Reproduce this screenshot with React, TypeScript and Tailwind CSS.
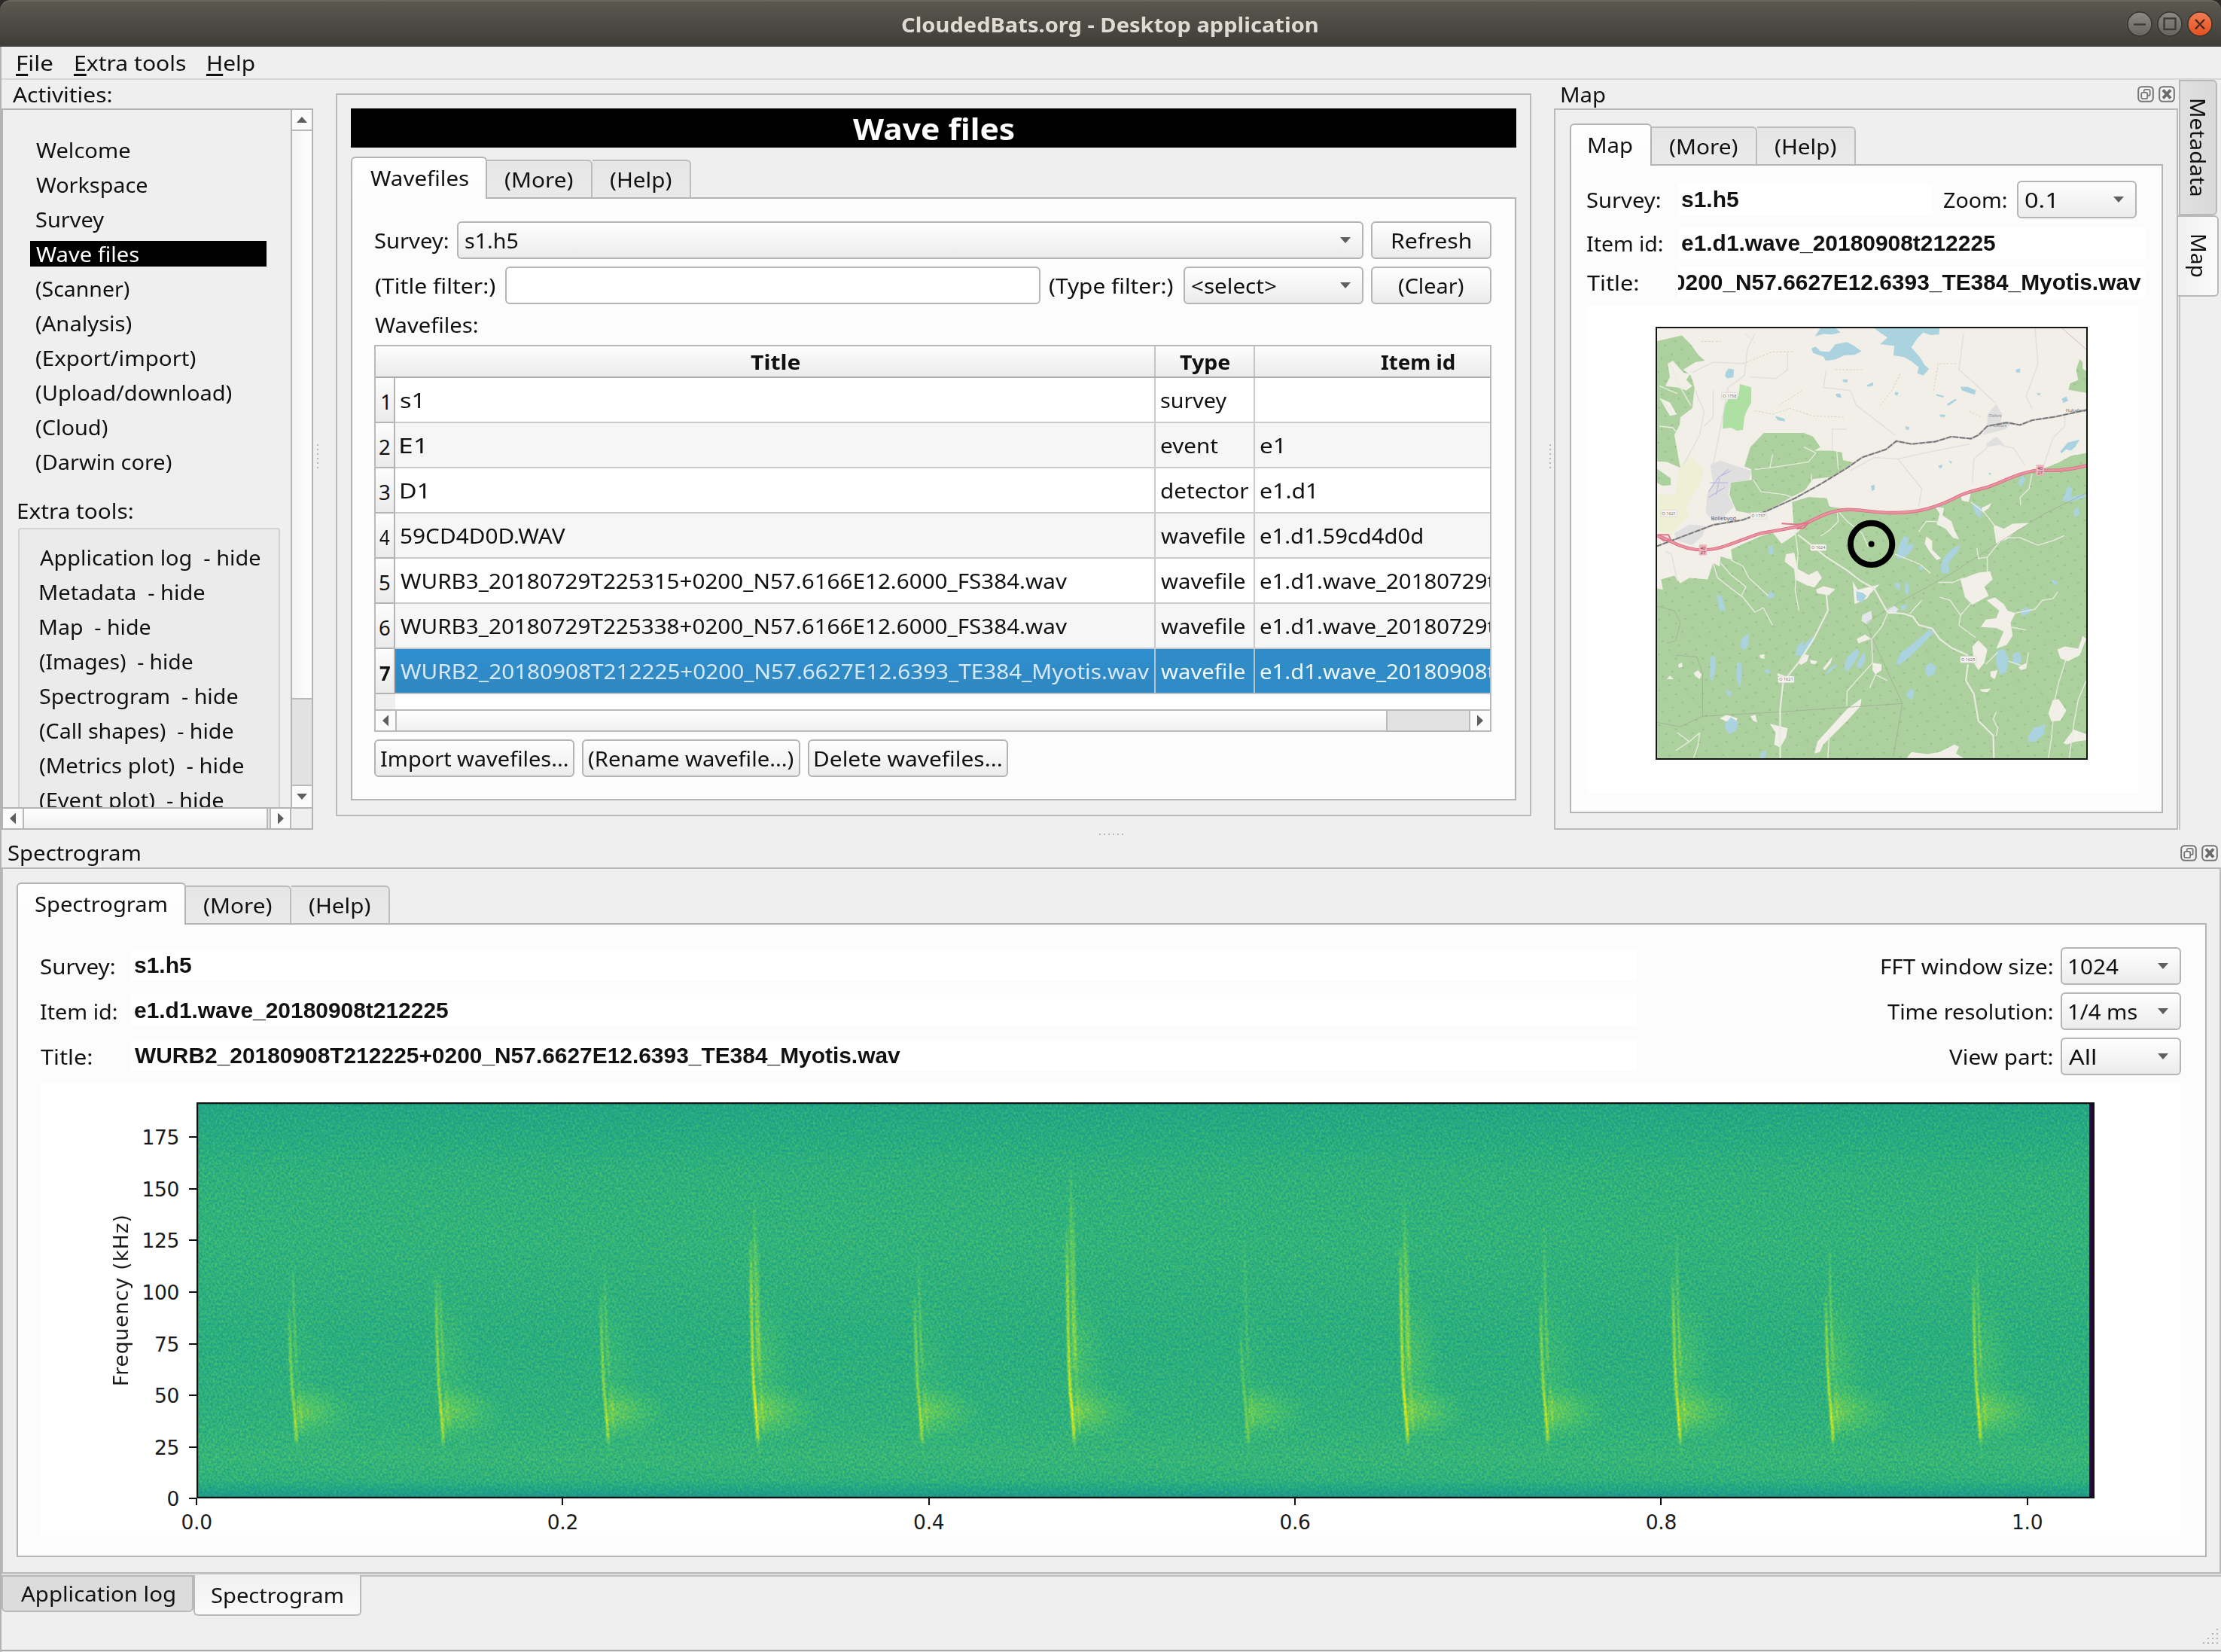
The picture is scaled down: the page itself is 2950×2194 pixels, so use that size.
import React from "react";

/* ---------- text fitted to a given ink width ---------- */

const FONTS = {
  ui: { cls: "font-['Noto_Sans',sans-serif] text-[27.5px] leading-[36px]", css: "27.5px 'Noto Sans'" },
  uib: { cls: "font-['Noto_Sans',sans-serif] text-[27.5px] leading-[36px] font-bold", css: "bold 27.5px 'Noto Sans'" },
  caption: { cls: "font-['Noto_Sans',sans-serif] text-[27px] leading-[36px] font-bold", css: "bold 27px 'Noto Sans'" },
  heading: { cls: "font-['Noto_Sans',sans-serif] text-[40px] leading-[50px] font-bold", css: "bold 40px 'Noto Sans'" },
  value: { cls: "font-['Liberation_Sans',sans-serif] text-[30px] leading-[36px] font-bold", css: "bold 30px 'Liberation Sans'" },
};

let ctx: CanvasRenderingContext2D | null = null;

function T({
  w,
  children,
  font = "ui",
  vertical = false,
  mnemonic = false,
  className = "",
}: {
  w: number;
  children: string;
  font?: keyof typeof FONTS;
  vertical?: boolean;
  mnemonic?: boolean;
  className?: string;
}) {
  if (!ctx) ctx = document.createElement("canvas").getContext("2d");
  const f = FONTS[font];
  ctx!.font = f.css;
  const m = ctx!.measureText(children);
  const k = w / (m.actualBoundingBoxRight + m.actualBoundingBoxLeft);
  const left = m.actualBoundingBoxLeft * k;
  const outer = vertical ? { height: w } : { width: w };
  const inner = vertical
    ? { transform: `scaleY(${k})`, marginTop: left }
    : { transform: `scaleX(${k})`, marginLeft: left };
  return (
    <span
      className={`flex shrink-0 whitespace-pre ${vertical ? "[writing-mode:vertical-rl]" : "pt-px"} ${f.cls} ${className}`}
      style={outer}
    >
      <span className="block shrink-0 origin-top-left" style={inner}>
        {mnemonic ? (
          <>
            <span className="underline decoration-[3px] underline-offset-[4px]">{children[0]}</span>
            {children.slice(1)}
          </>
        ) : (
          children
        )}
      </span>
    </span>
  );
}

/* ---------- widgets ---------- */

function Arrow({ dir }: { dir: "up" | "down" | "left" | "right" }) {
  const d = {
    up: "M1 12 L8 4 L15 12 Z",
    down: "M1 4 L8 12 L15 4 Z",
    left: "M12 0.5 L4 8 L12 15.5 Z",
    right: "M4 0.5 L12 8 L4 15.5 Z",
  }[dir];
  return (
    <svg viewBox="0 0 16 16" className="h-4 w-4 shrink-0">
      <path d={d} fill="#5e5e5e" />
    </svg>
  );
}

function Combo({ className, text, w }: { className: string; text: string; w: number }) {
  return (
    <div
      className={`flex h-[50px] shrink-0 items-center justify-between rounded-[6px] border-2 border-[#b4b4b4] bg-linear-to-b from-[#fefefe] to-[#ececec] pr-[14px] pl-[9px] ${className}`}
    >
      <T w={w}>{text}</T>
      <Arrow dir="down" />
    </div>
  );
}

function Button({ className, text, w }: { className: string; text: string; w: number }) {
  return (
    <div
      className={`flex h-[50px] shrink-0 items-center justify-center rounded-[6px] border-2 border-[#b4b4b4] bg-linear-to-b from-[#fefefe] to-[#ececec] ${className}`}
    >
      <T w={w}>{text}</T>
    </div>
  );
}

function Tabs({ first, firstW, firstCls }: { first: string; firstW: number; firstCls: string }) {
  return (
    <div className="flex h-[54px] shrink-0 items-end">
      <div
        className={`relative z-10 -mb-[2px] flex h-[56px] justify-center rounded-t-[6px] border-2 border-b-0 border-[#b4b4b4] bg-linear-to-b from-white to-[#fcfcfc] pt-[8px] ${firstCls}`}
      >
        <T w={firstW}>{first}</T>
      </div>
      <div className="flex h-[50px] w-[140px] justify-center rounded-tr-[6px] border-2 border-b-0 border-l-0 border-[#bdbdbd] bg-linear-to-b from-[#e6e6e6] to-[#eaeaea] pt-[6px]">
        <T w={90}>(More)</T>
      </div>
      <div className="flex h-[50px] w-[131px] justify-center rounded-tr-[6px] border-2 border-b-0 border-l-0 border-[#bdbdbd] bg-linear-to-b from-[#e6e6e6] to-[#eaeaea] pt-[6px]">
        <T w={81}>(Help)</T>
      </div>
    </div>
  );
}

function DockButtons({ className }: { className: string }) {
  return (
    <div className={`flex ${className}`}>
      <svg viewBox="0 0 22 22" className="h-[22px] w-[22px]">
        <rect x="1.2" y="1.2" width="19.6" height="19.6" rx="4.5" fill="#f4f4f4" stroke="#757575" strokeWidth="2" />
        <rect x="8.7" y="4.8" width="8" height="8.4" rx="2" fill="none" stroke="#757575" strokeWidth="1.8" />
        <rect x="5.2" y="8.8" width="8" height="8.4" rx="2" fill="#f4f4f4" stroke="#757575" strokeWidth="1.8" />
      </svg>
      <svg viewBox="0 0 22 22" className="h-[22px] w-[22px]">
        <rect x="1.2" y="1.2" width="19.6" height="19.6" rx="4.5" fill="#f4f4f4" stroke="#757575" strokeWidth="2" />
        <path d="M6 5.5 L16 16.5 M16 5.5 L6 16.5" stroke="#6a6a6a" strokeWidth="4" />
      </svg>
    </div>
  );
}

function Grip({ horizontal = false }: { horizontal?: boolean }) {
  return (
    <div className={`flex gap-[4px] ${horizontal ? "" : "flex-col"}`}>
      {[0, 1, 2, 3, 4, 5].map((i) => (
        <div key={i} className="h-[2px] w-[2px] bg-[#b9b9b9]" />
      ))}
    </div>
  );
}

/* ---------- title and menu bars ---------- */

function TitleBar() {
  return (
    <div className="h-[62px] shrink-0 bg-[#2b2a27]">
      <div className="flex h-full items-center rounded-t-[14px] border-t-2 border-[#6b6860] bg-linear-to-b from-[#5c5850] to-[#3e3d38]">
        <div className="w-[1198px]" />
        <T w={552} font="caption" className="text-[#dfdbd2]">
          CloudedBats.org - Desktop application
        </T>
        <svg viewBox="0 0 120 40" className="ml-[1072px] h-[40px] w-[120px]">
          <defs>
            <linearGradient id="tb-grey" x1="0" y1="0" x2="0" y2="1">
              <stop offset="0" stopColor="#8c8a83" />
              <stop offset="1" stopColor="#66645d" />
            </linearGradient>
            <linearGradient id="tb-red" x1="0" y1="0" x2="0" y2="1">
              <stop offset="0" stopColor="#f37c54" />
              <stop offset="1" stopColor="#e3501f" />
            </linearGradient>
          </defs>
          <circle cx="20" cy="20" r="16" fill="url(#tb-grey)" stroke="#35342f" strokeWidth="1.5" />
          <path d="M12 20.5 H28" stroke="#3c3b37" strokeWidth="2.4" />
          <circle cx="60" cy="20" r="16" fill="url(#tb-grey)" stroke="#35342f" strokeWidth="1.5" />
          <rect x="52.5" y="12.5" width="15" height="14.5" fill="none" stroke="#3c3b37" strokeWidth="2.4" />
          <circle cx="100" cy="20" r="16" fill="url(#tb-red)" stroke="#35342f" strokeWidth="1.5" />
          <path d="M94 14 L106 26.5 M106 14 L94 26.5" stroke="#4a2a1c" strokeWidth="2.4" />
        </svg>
      </div>
    </div>
  );
}

function MenuBar() {
  return (
    <div className="flex h-[44px] shrink-0 items-center border-b-2 border-[#d6d6d6] pl-[21px]">
      <T w={47} mnemonic>
        File
      </T>
      <div className="w-[30px]" />
      <T w={146} mnemonic>
        Extra tools
      </T>
      <div className="w-[30px]" />
      <T w={62} mnemonic>
        Help
      </T>
    </div>
  );
}

/* ---------- activities ---------- */

const ACTIVITIES: [string, number][] = [
  ["Welcome", 125],
  ["Workspace", 148],
  ["Survey", 91],
  ["Wave files", 136],
  ["(Scanner)", 124],
  ["(Analysis)", 127],
  ["(Export/import)", 212],
  ["(Upload/download)", 260],
  ["(Cloud)", 95],
  ["(Darwin core)", 180],
];

const TOOLS: [string, number][] = [
  ["Application log  - hide", 293],
  ["Metadata  - hide", 219],
  ["Map  - hide", 147],
  ["(Images)  - hide", 203],
  ["Spectrogram  - hide", 263],
  ["(Call shapes)  - hide", 257],
  ["(Metrics plot)  - hide", 271],
  ["(Event plot)  - hide", 244],
];

function Activities() {
  return (
    <div className="flex w-[414px] shrink-0 flex-col">
      <div className="flex h-[38px] items-center pl-[15px]">
        <T w={131}>Activities:</T>
      </div>
      <div className="flex h-[958px] flex-col border-2 border-[#b4b4b4]">
        <div className="flex h-[926px]">
          <div className="flex w-[382px] flex-col overflow-hidden">
            <div className="mt-[33px] flex flex-col gap-[6px] pl-[36px]">
              {ACTIVITIES.map(([name, w]) => (
                <div key={name} className="flex h-[40px] items-center">
                  <div
                    className={
                      name === "Wave files"
                        ? "flex h-[34px] w-[314px] items-center bg-black pl-[8px] text-white"
                        : "flex h-[34px] w-[314px] items-center pl-[8px]"
                    }
                  >
                    <T w={w}>{name}</T>
                  </div>
                </div>
              ))}
            </div>
            <div className="mt-[27px] flex h-[36px] pl-[20px]">
              <T w={152}>Extra tools:</T>
            </div>
            <div className="mt-[5px] ml-[20px] h-[400px] w-[348px] shrink-0 rounded-[4px] border-2 border-[#d2d2d2] bg-[#ebebeb] pt-[14px] pl-[27px]">
              {TOOLS.map(([name, w]) => (
                <div key={name} className="flex h-[46px] items-center">
                  <T w={w}>{name}</T>
                </div>
              ))}
            </div>
          </div>
          <div className="flex w-[28px] flex-col border-l-2 border-[#b4b4b4]">
            <div className="flex h-[28px] items-center justify-center border-b-2 border-[#b9b9b9] bg-[#fbfbfb]">
              <Arrow dir="up" />
            </div>
            <div className="h-[755px] border-b-2 border-[#b9b9b9] bg-linear-to-r from-[#f3f3f3] to-white" />
            <div className="h-[115px] border-b-2 border-[#b9b9b9] bg-[#e2e2e2]" />
            <div className="flex flex-1 items-center justify-center bg-[#fbfbfb]">
              <Arrow dir="down" />
            </div>
          </div>
        </div>
        <div className="flex h-[28px] border-t-2 border-[#b4b4b4]">
          <div className="flex w-[28px] items-center justify-center border-r-2 border-[#b9b9b9] bg-[#fbfbfb]">
            <Arrow dir="left" />
          </div>
          <div className="w-[324px] border-r-2 border-[#b9b9b9] bg-linear-to-b from-white to-[#f1f1f1]" />
          <div className="w-[4px] border-r-2 border-[#b9b9b9] bg-[#e2e2e2]" />
          <div className="flex w-[27px] items-center justify-center border-r-2 border-[#b9b9b9] bg-[#fbfbfb]">
            <Arrow dir="right" />
          </div>
        </div>
      </div>
    </div>
  );
}

/* ---------- wave files ---------- */

type Row = { t: string; tw: number; k: string; kw: number; i?: string; iw?: number };

const ROWS: Row[] = [
  { t: "s1", tw: 26, k: "survey", kw: 88 },
  { t: "E1", tw: 30, k: "event", kw: 76, i: "e1", iw: 28 },
  { t: "D1", tw: 33, k: "detector", kw: 116, i: "e1.d1", iw: 71 },
  { t: "59CD4D0D.WAV", tw: 219, k: "wavefile", kw: 112, i: "e1.d1.59cd4d0d", iw: 215 },
  {
    t: "WURB3_20180729T225315+0200_N57.6166E12.6000_FS384.wav",
    tw: 885,
    k: "wavefile",
    kw: 112,
    i: "e1.d1.wave_20180729t225315",
    iw: 412,
  },
  {
    t: "WURB3_20180729T225338+0200_N57.6166E12.6000_FS384.wav",
    tw: 885,
    k: "wavefile",
    kw: 112,
    i: "e1.d1.wave_20180729t225338",
    iw: 412,
  },
  {
    t: "WURB2_20180908T212225+0200_N57.6627E12.6393_TE384_Myotis.wav",
    tw: 994,
    k: "wavefile",
    kw: 112,
    i: "e1.d1.wave_20180908t212225",
    iw: 412,
  },
];

function WaveTable() {
  return (
    <div className="flex h-[514px] w-[1484px] flex-col border-2 border-[#b9b9b9] bg-white">
      <div className="flex h-[42px] border-b-2 border-[#adadad] bg-linear-to-b from-[#fdfdfd] to-[#ebebeb]">
        <div className="flex w-[1036px] shrink-0 items-center justify-center border-r-2 border-[#c4c4c4] pl-[28px]">
          <T w={66} font="uib">
            Title
          </T>
        </div>
        <div className="flex w-[132px] items-center justify-center border-r-2 border-[#c4c4c4]">
          <T w={67} font="uib">
            Type
          </T>
        </div>
        <div className="flex items-center pl-[167px]">
          <T w={98} font="uib">
            Item id
          </T>
        </div>
      </div>
      {ROWS.map((r, n) => {
        const sel = n === 6;
        return (
          <div key={n} className="flex h-[60px] shrink-0">
            <div className="flex w-[26px] shrink-0 items-center justify-center border-r-2 border-b-2 border-[#b4b4b4] bg-linear-to-b from-[#fdfdfd] to-[#ebebeb] pt-[4px]">
              <T w={n === 0 ? 8 : 14} font={sel ? "uib" : "ui"}>
                {String(n + 1)}
              </T>
            </div>
            <div
              className={
                sel
                  ? "flex w-[1010px] shrink-0 items-center border-r-2 border-b-2 border-[#b8c4cc] bg-linear-to-b from-[#2f8fd0] to-[#2f87bf] pl-[7px] text-[#d6e8f5]"
                  : n % 2
                    ? "flex w-[1010px] shrink-0 items-center border-r-2 border-b-2 border-[#cbcbcb] bg-[#f6f6f6] pl-[7px]"
                    : "flex w-[1010px] shrink-0 items-center border-r-2 border-b-2 border-[#cbcbcb] pl-[7px]"
              }
            >
              <T w={r.tw}>{r.t}</T>
            </div>
            <div
              className={
                sel
                  ? "flex w-[132px] shrink-0 items-center border-r-2 border-b-2 border-[#b8c4cc] bg-[#308cc6] pl-[7px] text-[#eff6fb]"
                  : n % 2
                    ? "flex w-[132px] shrink-0 items-center border-r-2 border-b-2 border-[#cbcbcb] bg-[#f6f6f6] pl-[7px]"
                    : "flex w-[132px] shrink-0 items-center border-r-2 border-b-2 border-[#cbcbcb] pl-[7px]"
              }
            >
              <T w={r.kw}>{r.k}</T>
            </div>
            <div
              className={
                sel
                  ? "flex w-[312px] shrink-0 items-center overflow-hidden border-b-2 border-[#b8c4cc] bg-[#308cc6] pl-[7px] text-[#eff6fb]"
                  : n % 2
                    ? "flex w-[312px] shrink-0 items-center overflow-hidden border-b-2 border-[#cbcbcb] bg-[#f6f6f6] pl-[7px]"
                    : "flex w-[312px] shrink-0 items-center overflow-hidden border-b-2 border-[#cbcbcb] pl-[7px]"
              }
            >
              {r.i && <T w={r.iw!}>{r.i}</T>}
            </div>
          </div>
        );
      })}
      <div className="flex flex-1">
        <div className="w-[26px] bg-[#efefef]" />
      </div>
      <div className="flex h-[28px] border-t-2 border-[#b9b9b9]">
        <div className="flex w-[28px] items-center justify-center border-r-2 border-[#b9b9b9] bg-[#fbfbfb]">
          <Arrow dir="left" />
        </div>
        <div className="w-[1316px] border-r-2 border-[#b9b9b9] bg-linear-to-b from-white to-[#f1f1f1]" />
        <div className="w-[110px] border-r-2 border-[#b9b9b9] bg-[#e2e2e2]" />
        <div className="flex flex-1 items-center justify-center bg-[#fbfbfb]">
          <Arrow dir="right" />
        </div>
      </div>
    </div>
  );
}

function WaveFiles() {
  return (
    <div className="mt-[18px] flex h-[960px] w-[1588px] shrink-0 flex-col border-2 border-[#bababa] pt-[18px] pl-[18px]">
      <div className="flex h-[52px] w-[1548px] shrink-0 items-center justify-center bg-black">
        <T w={214} font="heading" className="text-white">
          Wave files
        </T>
      </div>
      <div className="h-[12px] shrink-0" />
      <Tabs first="Wavefiles" firstW={130} firstCls="w-[181px]" />
      <div className="flex h-[801px] w-[1548px] flex-col border-2 border-[#b4b4b4] bg-[#fcfcfc] pt-[30px] pl-[29px]">
        <div className="flex items-center">
          <div className="w-[1px]" />
          <T w={97}>Survey:</T>
          <div className="w-[12px]" />
          <Combo className="w-[1204px]" text="s1.h5" w={70} />
          <div className="w-[10px]" />
          <Button className="w-[160px]" text="Refresh" w={104} />
        </div>
        <div className="mt-[10px] flex items-center">
          <div className="w-[2px]" />
          <T w={159}>(Title filter:)</T>
          <div className="w-[13px]" />
          <div className="h-[50px] w-[711px] rounded-[6px] border-2 border-[#b4b4b4] bg-white" />
          <div className="w-[12px]" />
          <T w={164}>(Type filter:)</T>
          <div className="w-[14px]" />
          <Combo className="w-[239px]" text="<select>" w={112} />
          <div className="w-[10px]" />
          <Button className="w-[160px]" text="(Clear)" w={86} />
        </div>
        <div className="mt-[9px] mb-[9px] flex h-[36px] pl-[1px]">
          <T w={136}>Wavefiles:</T>
        </div>
        <WaveTable />
        <div className="mt-[10px] flex gap-[10px]">
          <Button className="w-[266px]" text="Import wavefiles..." w={248} />
          <Button className="w-[290px]" text="(Rename wavefile...)" w={272} />
          <Button className="w-[266px]" text="Delete wavefiles..." w={248} />
        </div>
      </div>
    </div>
  );
}

/* ---------- map ---------- */

const LAKES = [
  "M600 40 L650 40 L668 55 L640 62 L610 60 L582 68 Z",
  "M570 108 L585 103 L600 118 L630 120 L650 95 L690 87 L712 100 L738 118 L715 130 L680 132 L650 146 L618 150 L610 136 L575 124 Z",
  "M780 40 L1000 40 L998 62 L970 64 L945 55 L925 75 L905 105 L935 140 L950 165 L965 178 L945 200 L925 192 L930 172 L905 152 L880 138 L845 132 L848 100 L800 95 L825 72 L795 52 Z",
  "M282 190 L292 176 L310 180 L308 205 L290 210 L280 203 Z",
  "M674 213 L692 213 L690 223 L678 222 Z M755 232 L778 222 L776 234 L760 238 Z",
  "M650 262 L665 260 L672 275 L655 272 Z M850 255 L862 256 L858 268 L850 264 Z",
  "M1070 238 L1095 238 L1122 250 L1118 264 L1098 258 L1075 250 Z",
  "M1024 296 L1052 278 L1058 282 L1030 302 Z M988 262 L1014 268 L1012 274 L990 268 Z",
  "M1255 180 L1270 176 L1270 190 L1258 190 Z M1410 278 L1425 270 L1432 284 L1415 292 Z",
  "M448 336 L478 344 L482 354 L456 350 Z M885 370 L900 374 L895 384 L887 380 Z",
  "M1405 455 L1430 425 L1470 415 L1455 440 L1440 452 L1425 448 L1408 462 Z",
  "M770 570 L782 566 L782 584 L772 588 Z M996 502 L1010 500 L1006 512 L998 510 Z M1030 486 L1042 488 L1038 497 Z",
  "M1000 330 L1020 332 L1016 340 L1002 338 Z M1164 526 L1174 528 L1168 536 Z M1324 258 L1340 260 L1334 268 Z",
  "M1108 628 L1138 640 L1140 680 L1120 665 Z",
  "M1412 620 L1430 570 L1445 580 L1440 610 L1490 595 L1490 608 L1440 625 Z",
  "M1072 768 L1062 790 L1030 830 L1032 862 L1008 866 L1003 840 L1015 810 L1045 780 Z",
  "M855 815 L862 775 L880 740 L898 745 L890 770 L915 765 L905 790 L880 815 Z",
  "M850 895 L868 900 L865 920 L852 915 Z M885 890 L898 905 L895 938 L884 930 Z",
  "M425 775 L440 770 L442 800 L426 798 Z M252 935 L268 940 L282 990 L262 990 Z",
  "M420 940 L432 925 L447 936 L440 948 L424 948 Z",
  "M335 1085 L360 1065 L358 1105 L345 1125 L332 1110 Z",
  "M232 1145 L247 1142 L248 1190 L238 1228 L228 1215 Z M320 1165 L334 1165 L336 1205 L330 1252 L318 1215 Z",
  "M412 1190 L425 1185 L432 1198 L418 1203 Z",
  "M515 1140 L525 1105 L545 1090 L540 1110 L575 1075 L578 1095 L540 1140 Z",
  "M680 1180 L690 1145 L725 1115 L730 1135 L710 1170 L690 1195 Z M722 1180 L725 1160 L748 1130 L752 1155 L735 1185 Z",
  "M615 1200 L650 1170 L655 1176 L625 1202 Z",
  "M852 1170 L870 1130 L905 1105 L965 1055 L985 1058 L950 1095 L900 1145 L865 1172 Z",
  "M955 1175 L970 1165 L988 1180 L980 1205 L960 1212 L952 1195 Z",
  "M1188 1130 L1215 1118 L1232 1150 L1225 1195 L1205 1206 L1192 1175 Z",
  "M1245 1135 L1270 1128 L1275 1155 L1265 1172 L1245 1165 Z",
  "M1272 990 L1290 978 L1308 988 L1295 1002 L1275 1008 Z",
  "M1295 1415 L1315 1385 L1355 1372 L1350 1405 L1320 1430 L1300 1430 Z",
  "M280 1370 L300 1348 L325 1365 L318 1392 L295 1405 L282 1390 Z",
  "M888 1270 L905 1252 L915 1262 L908 1290 L890 1280 Z M282 1255 L300 1262 L300 1278 L286 1272 Z",
  "M720 925 L742 930 L755 940 L740 962 L722 955 Z M400 1465 L418 1460 L415 1485 L398 1485 Z",
  "M1450 655 L1465 640 L1470 668 L1452 675 Z M1262 560 L1278 535 L1288 545 L1275 575 Z",
  "M930 840 L944 842 L940 855 L932 853 Z M868 975 L892 970 L886 985 L872 990 Z M1375 885 L1398 895 L1392 905 L1378 897 Z",
];

const CLEARINGS = [
  "M485 800 L512 795 L520 830 L525 850 L560 870 L590 855 L605 880 L580 912 L555 905 L515 885 L512 850 L480 825 Z",
  "M585 920 L610 908 L650 918 L628 938 L590 932 Z",
  "M1070 885 L1130 862 L1170 858 L1178 885 L1150 910 L1165 940 L1110 970 L1085 945 Z",
  "M1158 955 L1185 945 L1215 968 L1228 990 L1255 998 L1238 1030 L1245 1075 L1225 1105 L1190 1118 L1215 1060 L1190 1048 L1138 1045 L1155 1020 L1190 1015 L1200 990 Z",
  "M1110 1110 L1130 1090 L1160 1120 L1150 1165 L1130 1190 L1115 1165 Z",
  "M1395 1120 L1420 1110 L1465 1118 L1480 1075 L1492 1085 L1470 1140 L1430 1160 L1405 1150 Z",
  "M1380 1290 L1400 1288 L1425 1325 L1405 1360 L1375 1362 L1365 1335 Z",
  "M1415 1435 L1450 1390 L1492 1405 L1492 1425 L1455 1430 L1425 1440 Z",
  "M430 1370 L490 1385 L485 1415 L465 1450 L445 1440 L450 1400 Z",
  "M580 1470 L590 1430 L640 1375 L690 1320 L738 1285 L735 1310 L690 1360 L640 1410 L610 1440 L598 1465 Z",
  "M775 1165 L805 1170 L805 1190 L785 1205 L775 1190 Z M722 1085 L750 1070 L770 1085 L740 1095 L728 1100 Z",
  "M1180 700 L1215 715 L1245 698 L1305 695 L1260 720 L1225 750 L1190 765 Z",
  "M985 640 L1015 645 L1010 670 L1040 690 L1050 720 L1065 750 L1045 745 L1020 715 L990 700 L1000 665 Z",
  "M955 740 L975 755 L975 785 L1005 815 L990 820 L965 790 L950 765 Z",
  "M708 890 L725 920 L798 902 L770 930 L755 950 L715 968 Z",
  "M1068 598 L1105 592 L1098 625 L1075 620 Z M1140 645 L1175 628 L1165 645 L1145 660 Z",
  "M175 1200 L190 1190 L202 1205 L195 1220 L180 1210 Z M85 1220 L95 1208 L108 1220 Z M122 1172 L135 1164 L138 1178 L126 1182 Z",
  "M262 1352 L285 1340 L322 1352 L315 1365 L282 1362 Z M365 1345 L382 1340 L388 1366 L375 1360 Z M395 1140 L412 1136 L412 1152 L400 1150 Z",
  "M525 1165 L540 1135 L562 1140 L555 1160 L535 1172 Z M565 1155 L590 1160 L582 1170 L568 1168 Z M608 1185 L640 1145 L635 1165 L615 1190 Z",
  "M455 1200 L480 1208 L495 1215 L480 1228 L460 1222 Z M890 1485 L905 1465 L960 1472 L1000 1465 L1050 1440 L1065 1448 L1055 1470 L1080 1485 Z",
  "M1135 1255 L1172 1252 L1160 1264 L1142 1262 Z M1265 1180 L1292 1165 L1290 1185 L1272 1190 Z M1170 1195 L1195 1190 L1185 1220 L1172 1212 Z",
];

const ROADS = [
  "M515 720 L525 800 L515 920 L528 990",
  "M600 740 L630 720 L660 690 L655 650 L690 690 L740 730 L760 775",
  "M1000 945 L1035 955 L1070 1005 L1065 1040 L1120 1080 M1070 1005 L1105 965",
  "M240 830 L255 880 L300 915 L340 945 L380 995 L408 980 L440 1040",
  "M265 830 L300 870 L350 910 L335 940 M300 820 L340 840 L360 880 L425 940",
  "M1105 625 L1150 660 L1185 705 L1200 760 L1160 810 L1130 815 L1125 780 M1160 810 L1160 860",
  "M825 1000 L805 1045 L772 1085 L775 1165 L730 1215 L690 1260 L688 1310",
  "M850 800 L900 820 L935 835 L970 865 M930 725 L955 690 L985 690 L1015 700",
  "M1200 745 L1270 745 L1330 770 L1380 755 L1418 738",
  "M1310 530 L1300 580 L1270 610 L1272 635",
  "M1255 998 L1320 985 L1345 955 L1380 950 L1398 925",
  "M1155 1170 L1195 1130 M1232 1160 L1290 1180 L1298 1130 M1240 1045 L1290 1055",
  "M1380 1362 L1375 1420 L1365 1485 M1425 1150 L1400 1230 L1385 1295 M1492 1225 L1465 1290 L1450 1370 L1435 1485",
  "M785 1205 L765 1250 M785 1205 L825 1225 M900 1000 L940 955 M995 895 L1045 895 L1080 880",
  "M1190 1330 L1180 1355 L1195 1385 L1190 1410 M630 1400 L625 1485 M195 1400 L190 1440 L175 1485",
  "M120 1400 L160 1430 L195 1400 M160 1430 L115 1460",
  "M380 515 L430 510 L440 465 M430 510 L560 490 L585 460 L545 440 M375 550 L400 590 L480 600 L520 615",
  "M655 455 L660 515 M570 530 L570 560 M95 160 L125 230 L165 300 M60 235 L120 260 M65 280 L105 325 M60 370 L105 375 L125 400",
];

const MAIN_ROADS = [
  "M525 735 L570 770 L620 810 L690 855 L735 890 L780 915 L825 995 L880 1000 L910 1010 L930 1038 L975 1050 L1000 1085 L1040 1115 L1095 1140",
  "M620 935 L625 990 L580 1080 L530 1160 L475 1230 L465 1320 L465 1485",
  "M1095 1170 L1088 1225 L1115 1270 L1130 1360 L1180 1410 L1182 1485",
];

const RAIL =
  "M50 774 L100 755 L240 702 L340 685 L420 655 L515 612 L600 565 L690 510 L740 475 L820 448 L855 420 L905 430 L985 422 L1040 405 L1105 412 L1130 400 L1160 370 L1225 358 L1270 366 L1310 350 L1390 338 L1494 315";

const MOTORWAY =
  "M50 738 Q75 745 100 758 Q150 785 205 786 C270 786 320 755 400 730 Q460 720 520 708 C570 695 610 655 690 650 C740 650 780 662 850 661 C930 660 990 645 1070 602 Q1100 590 1150 578 C1200 565 1250 530 1320 519 L1400 518 Q1450 514 1495 502";

const SHIELDS: [number, number, string][] = [
  [295, 268, "O 1758"],
  [92, 663, "O 1621"],
  [392, 671, "O 1757"],
  [593, 778, "O 1624"],
  [485, 1221, "O 1621"],
  [1096, 1154, "O 1625"],
];

function MapPicture() {
  const land = "#f2efe9";
  const green = "#add19e";
  const water = "#aad3df";
  return (
    <svg viewBox="47 36 1450 1455" preserveAspectRatio="none" className="h-[575px] w-[574px] font-['Noto_Sans',sans-serif]">
      <defs>
        <pattern id="trees" width="58" height="46" patternUnits="userSpaceOnUse" patternTransform="rotate(14)">
          <path d="M10 10 l4 -4 l4 4 z M38 32 l4 -4 l4 4 z" fill="#93bd85" stroke="#93bd85" strokeWidth="1.5" />
        </pattern>
        <g id="forest">
          <path d="M50 85 L135 65 L165 95 L190 130 L212 150 L180 155 L140 180 L165 200 L178 240 L170 310 L130 340 L128 365 L110 400 L130 510 L85 490 L50 488 Z" />
          <path d="M410 393 L545 393 L575 405 L600 440 L580 452 L640 452 L672 458 L676 484 L710 492 L640 540 L575 548 L548 585 L500 610 L420 655 L360 662 L318 655 L295 600 L300 560 L370 550 L368 515 L345 505 L365 440 Z" />
          <path d="M50 512 L98 545 L98 568 L70 570 L50 560 Z" />
          <path d="M1470 145 L1480 155 L1480 178 L1494 185 L1494 258 L1432 248 L1438 226 L1465 215 L1458 180 Z" />
          <path d="M505 625 L560 608 L622 612 L630 640 L665 645 L740 652 L800 662 L870 664 L930 657 L1000 637 L1070 602 L1130 585 L1200 564 L1260 537 L1320 518 L1350 512 L1400 492 L1440 470 L1494 460 L1494 1489 L50 1489 L50 915 L72 920 L65 885 L110 872 L130 898 L160 880 L222 885 L240 830 L262 842 L265 808 L305 820 L300 785 L335 768 L400 740 L440 728 L470 765 L515 735 L535 715 L510 700 Z" />
        </g>
      </defs>
      <rect x="47" y="36" width="1450" height="1455" fill={land} />
      <path d="M130 500 L160 470 L210 510 L195 570 L150 640 L160 670 L100 735 L50 720 L50 600 L110 600 Z" fill="#eef0d5" />
      <path
        d="M230 500 L265 485 L320 505 L370 520 L360 550 L300 560 L290 600 L310 640 L270 680 L240 690 L215 660 L220 600 L240 560 Z M110 730 L160 700 L215 705 L205 740 L170 770 L120 755 Z M1160 330 L1190 296 L1210 330 L1205 355 L1250 355 L1220 380 L1145 400 L1160 365 Z M1155 430 L1190 405 L1215 430 L1160 440 Z"
        fill="#e0dfdf"
      />
      <path d="M225 590 L260 540 L300 520 M230 560 L290 560 M250 600 L262 545 M225 610 L280 575 M262 540 L290 515" stroke="#b9b9df" strokeWidth="3" fill="none" />
      <use href="#forest" fill={green} />
      <use href="#forest" fill="url(#trees)" />
      <path d="M330 228 L368 240 L368 290 L352 320 L345 340 L340 382 L320 385 L300 375 L272 378 L275 310 L290 280 L325 270 Z" fill="#aedfa3" />
      <path d="M88 160 L105 150 L140 190 L162 195 L150 215 L170 235 L150 250 L120 240 L80 235 L95 205 Z M60 275 L95 290 L118 330 L95 335 Z" fill={land} />
      <g fill="none" stroke="#e3dfdf" strokeWidth="4">
        <path d="M380 60 L355 110 L345 200 L290 240 L260 400 L240 500 M170 190 L240 155 L340 160 M365 205 L450 210 L490 180 L490 120 M180 250 L210 320 L195 400 L140 500 M240 250 L240 340 L210 370" />
        <path d="M1080 60 L1065 180 L1110 220 L1185 290 M1320 40 L1330 160 L1290 270 L1310 310 M610 240 L700 250 L720 300 L800 360 L850 400 M620 180 L610 240 M640 450 L640 380 L690 380" />
        <path d="M700 520 L780 475 L860 480 L950 460 L1100 430 M860 480 L940 580 L930 640 M1110 560 L1115 480 L1180 425 L1250 445 L1285 500 M1350 500 L1380 410 L1420 370 L1420 330 M80 790 L100 800 L120 890" />
      </g>
      <path
        d="M350 60 L385 95 M380 318 L440 330 L500 310 L570 335 L680 340 M460 300 L540 250 M980 250 L995 160 L1060 160 M800 300 L840 250 L870 190 M1100 320 L1140 340 M650 180 L740 180 M200 85 L265 85 M340 160 L440 120 L510 120"
        stroke="#dccfbf"
        strokeWidth="2.5"
        strokeDasharray="7 5"
        fill="none"
      />
      <g fill={land}>
        {CLEARINGS.map((d) => (
          <path key={d} d={d} />
        ))}
      </g>
      <g fill={water}>
        {LAKES.map((d) => (
          <path key={d} d={d} />
        ))}
      </g>
      <path d="M740 1005 L770 990 L775 1020 L755 1035 L738 1025 Z M822 985 L845 972 L862 985 L850 1000 L825 1000 Z" fill="#e3e6ea" />
      <path
        d="M50 975 L110 990 L130 1030 L115 1090 L85 1100 M115 1140 L185 1145 L205 1200 L205 1345 L130 1380 L50 1365 M205 1345 L470 1330 L875 1302 L845 1480 M875 1302 L755 1040 L745 1035 M755 1030 L860 965 L1040 865 L1200 760 L1350 665 L1492 595"
        fill="none"
        stroke="#98a892"
        strokeWidth="2.2"
        opacity="0.8"
      />
      <path d="M1410 40 L1492 112" stroke="#cfb5cb" strokeWidth="2.5" fill="none" />
      <g fill="none" stroke="#e9ebe0" strokeLinejoin="round">
        {ROADS.map((d) => (
          <path key={d} d={d} strokeWidth="3.4" />
        ))}
        {MAIN_ROADS.map((d) => (
          <path key={d} d={d} strokeWidth="5.5" />
        ))}
      </g>
      <g fill="none" strokeLinejoin="round">
        <path d={RAIL} stroke="#b3b3b3" strokeWidth="6" />
        <path d={RAIL} stroke="#77777b" strokeWidth="4.5" strokeDasharray="18 5" />
        <path d={MOTORWAY} stroke="#d9697e" strokeWidth="11" />
        <path d={MOTORWAY} stroke="#e892a2" strokeWidth="7" />
        <path d="M470 697 L520 700 L560 695 L545 712 L520 715 M55 735 L90 735 L98 752 L75 755 L60 745" stroke="#e0748a" strokeWidth="5" />
      </g>
      <g textAnchor="middle">
        {SHIELDS.map(([x, y, s]) => (
          <g key={`${x}-${y}`}>
            <rect x={x - 27} y={y - 11} width="54" height="22" rx="4" fill="#f5f4f0" stroke="#cfccc6" strokeWidth="1.5" />
            <text x={x} y={y + 5} fontSize="14" fill="#77756f">
              {s}
            </text>
          </g>
        ))}
        {[
          [206, 786],
          [1337, 518],
        ].map(([x, y]) => (
          <g key={x}>
            <rect x={x - 13} y={y - 18} width="26" height="36" rx="3" fill="#eab4be" />
            <text x={x} y={y - 2} fontSize="14" fill="#7d2d3b">
              40
            </text>
            <text x={x} y={y + 13} fontSize="14" fill="#7d2d3b">
              27
            </text>
          </g>
        ))}
        <text x="275" y="686" fontSize="18" fill="#5c5c5c">
          Bollebygd
        </text>
        <text x="1186" y="340" fontSize="13" fill="#8a8a8a">
          Olsfors
        </text>
        <text x="1203" y="372" fontSize="13" fill="#8a8a8a">
          Olsfors
        </text>
        <text x="1456" y="321" fontSize="15" fill="#6e6e6e">
          Hultafors
        </text>
      </g>
      <circle cx="771" cy="766" r="70" fill="none" stroke="#000" strokeWidth="20" />
      <circle cx="771" cy="766" r="10" fill="#000" />
      <rect x="49.5" y="38.5" width="1445" height="1450" fill="none" stroke="#111" strokeWidth="5" />
    </svg>
  );
}

function MapDock() {
  return (
    <div className="flex w-[829px] shrink-0 flex-col">
      <div className="flex h-[38px] items-center pl-[10px]">
        <T w={58}>Map</T>
        <DockButtons className="ml-[707px] gap-[6px]" />
      </div>
      <div className="flex h-[958px] w-[829px] flex-col border-2 border-[#bababa] pt-[18px] pl-[19px]">
        <Tabs first="Map" firstW={58} firstCls="w-[109px]" />
        <div className="flex h-[862px] w-[788px] flex-col border-2 border-[#b4b4b4] bg-[#fcfcfc] pl-[21px]">
          <div className="mt-[20px] flex h-[50px] items-center">
            <T w={97}>Survey:</T>
            <div className="ml-[24px] flex h-[42px] w-[338px] items-center bg-white pb-[2px] pl-[5px]">
              <T w={75} font="value">
                s1.h5
              </T>
            </div>
            <div className="w-[15px]" />
            <T w={83}>Zoom:</T>
            <div className="w-[14px]" />
            <Combo className="w-[159px]" text="0.1" w={38} />
          </div>
          <div className="mt-[12px] flex h-[42px] items-center">
            <T w={100}>Item id:</T>
            <div className="ml-[21px] flex h-[42px] w-[620px] items-center bg-white pb-[2px] pl-[5px]">
              <T w={416} font="value">
                e1.d1.wave_20180908t212225
              </T>
            </div>
          </div>
          <div className="mt-[10px] flex h-[42px] items-center">
            <T w={68}>Title:</T>
            <div className="ml-[53px] flex h-[42px] w-[620px] items-center justify-end overflow-hidden bg-white pr-[5px] pb-[2px]">
              <T w={1017} font="value">
                WURB2_20180908T212225+0200_N57.6627E12.6393_TE384_Myotis.wav
              </T>
            </div>
          </div>
          <div className="mt-[10px] h-[648px] w-[732px] bg-white pt-[28px] pl-[91px]">
            <MapPicture />
          </div>
        </div>
      </div>
    </div>
  );
}

function SideTabs() {
  return (
    <div className="flex w-[57px] shrink-0 flex-col">
      <div className="ml-[1px] flex h-[180px] w-[51px] items-center justify-center rounded-r-[6px] border-2 border-[#b9b9b9] bg-linear-to-r from-[#e0e0e0] to-[#d9d9d9] pr-[2px]">
        <T w={128} vertical>
          Metadata
        </T>
      </div>
      <div className="flex h-[108px] w-[54px] items-center justify-center rounded-r-[6px] border-2 border-l-0 border-[#b9b9b9] bg-linear-to-r from-[#f0f0f0] to-[#fafafa] pl-[2px]">
        <T w={56} vertical>
          Map
        </T>
      </div>
      <div className="ml-[1px] h-[708px] border-l-2 border-[#c4c4c4]" />
    </div>
  );
}

/* ---------- spectrogram ---------- */

/* x position, top of main sweep (kHz), top of echo (kHz), strength, upper haze */
const CALLS: [number, number, number, number, number][] = [
  [133, 92, 117, 0.72, 0.04],
  [328, 108, 110, 0.8, 0.09],
  [547, 98, 115, 0.75, 0.07],
  [746, 125, 148, 1, 0.14],
  [964, 98, 118, 0.75, 0.06],
  [1166, 130, 165, 1, 0.15],
  [1397, 84, 128, 0.5, 0.03],
  [1609, 122, 150, 0.98, 0.16],
  [1795, 96, 132, 0.85, 0.08],
  [1971, 108, 128, 0.9, 0.14],
  [2174, 98, 124, 0.9, 0.13],
  [2370, 108, 122, 0.88, 0.12],
];

const PLOT_H = 526;
const fy = (f: number) => PLOT_H - f * 2.743;

function SpectrogramImage() {
  return (
    <svg viewBox="0 0 2521 526" className="h-[526px] w-[2521px] shrink-0">
      <defs>
        <filter id="viridis" x="0" y="0" width="1" height="1" colorInterpolationFilters="sRGB">
          <feTurbulence type="fractalNoise" baseFrequency="0.36 0.3" numOctaves="2" seed="7" result="n" />
          <feColorMatrix in="n" type="matrix" values="1 0 0 0 0  1 0 0 0 0  1 0 0 0 0  0 0 0 0 1" result="g" />
          <feComposite in="SourceGraphic" in2="g" operator="arithmetic" k1="0" k2="1" k3="0.26" k4="-0.13" result="s" />
          <feComponentTransfer in="s">
            <feFuncR type="table" tableValues="0.267 0.282 0.255 0.208 0.165 0.129 0.133 0.267 0.478 0.741 0.992" />
            <feFuncG type="table" tableValues="0.004 0.141 0.267 0.373 0.471 0.569 0.659 0.749 0.820 0.875 0.906" />
            <feFuncB type="table" tableValues="0.329 0.459 0.529 0.553 0.557 0.549 0.518 0.439 0.318 0.149 0.145" />
            <feFuncA type="table" tableValues="1 1" />
          </feComponentTransfer>
        </filter>
        <filter id="soft" x="-50%" y="-50%" width="200%" height="200%">
          <feGaussianBlur stdDeviation="0.9 2" />
        </filter>
        <linearGradient id="bed" x1="0" y1="0" x2="0" y2="1">
          <stop offset="0" stopColor="#979797" />
          <stop offset="0.06" stopColor="#9b9b9b" />
          <stop offset="0.18" stopColor="#a3a3a3" />
          <stop offset="0.35" stopColor="#a5a5a5" />
          <stop offset="0.6" stopColor="#a0a0a0" />
          <stop offset="0.8" stopColor="#a3a3a3" />
          <stop offset="0.9" stopColor="#a8a8a8" />
          <stop offset="0.955" stopColor="#a3a3a3" />
          <stop offset="0.975" stopColor="#979797" />
          <stop offset="1" stopColor="#868686" />
        </linearGradient>
        <linearGradient id="sweep" x1="0" y1="0" x2="0" y2="1">
          <stop offset="0" stopColor="#fff" stopOpacity="0.15" />
          <stop offset="0.25" stopColor="#fff" stopOpacity="0.6" />
          <stop offset="0.7" stopColor="#fff" stopOpacity="0.8" />
          <stop offset="0.82" stopColor="#fff" stopOpacity="1" />
          <stop offset="0.95" stopColor="#fff" stopOpacity="0.8" />
          <stop offset="1" stopColor="#fff" stopOpacity="0.1" />
        </linearGradient>
        <linearGradient id="echo" x1="0" y1="0" x2="0" y2="1">
          <stop offset="0" stopColor="#fff" stopOpacity="0.05" />
          <stop offset="0.3" stopColor="#fff" stopOpacity="0.4" />
          <stop offset="0.75" stopColor="#fff" stopOpacity="0.45" />
          <stop offset="1" stopColor="#fff" stopOpacity="0" />
        </linearGradient>
        <radialGradient id="tail" cx="0" cy="0.5" r="1" gradientTransform="translate(0 0.25) scale(1 0.5)">
          <stop offset="0" stopColor="#fff" stopOpacity="0.42" />
          <stop offset="0.3" stopColor="#fff" stopOpacity="0.3" />
          <stop offset="0.65" stopColor="#fff" stopOpacity="0.12" />
          <stop offset="1" stopColor="#fff" stopOpacity="0" />
        </radialGradient>
      </defs>
      <g filter="url(#viridis)">
        <rect width="2521" height="526" fill="url(#bed)" />
        {CALLS.map(([x, top, echoTop, s, haze]) => {
          const y0 = fy(top);
          const y1 = fy(26);
          return (
            <g key={x}>
              <rect x={x} y={fy(57)} width={82} height={82} fill="url(#tail)" opacity={0.6 + s * 0.3} />
              <rect x={x - 4} y={fy(105)} width={52} height={200} fill="url(#tail)" opacity={haze * 3.6} />
              <g filter="url(#soft)" fill="none">
                <path
                  d={`M${x - 10} ${y0} Q${x - 8} ${fy(62)} ${x - 5} ${fy(50)} Q${x - 2} ${fy(40)} ${x} ${y1}`}
                  stroke="url(#sweep)"
                  strokeWidth={3 + s * 0.8}
                  opacity={s}
                />
                <path
                  d={`M${x - 5} ${fy(echoTop)} Q${x - 4} ${fy(80)} ${x + 2} ${fy(55)}`}
                  stroke="url(#echo)"
                  strokeWidth="2.6"
                  opacity={s}
                />
                {s > 0.94 && (
                  <path
                    d={`M${x - 1} ${fy(echoTop - 20)} Q${x} ${fy(75)} ${x + 4} ${fy(50)}`}
                    stroke="url(#echo)"
                    strokeWidth="2.6"
                  />
                )}
                <path
                  d={`M${x + 3} ${fy(58)} Q${x + 5} ${fy(42)} ${x + 8} ${fy(29)}`}
                  stroke="url(#echo)"
                  strokeWidth="2.4"
                  opacity={s * 0.8}
                />
                <path d={`M${x} ${fy(30)} L${x + 1} ${fy(20)}`} stroke="#fff" strokeWidth="2.2" opacity={s * 0.15} />
              </g>
            </g>
          );
        })}
      </g>
      <rect x="2514" y="0" width="7" height="526" fill="#2b0640" />
      <path d="M0 1 H2519.5 V525 H1 V0" fill="none" stroke="#111" strokeWidth="2.4" />
    </svg>
  );
}

const YT = [175, 150, 125, 100, 75, 50, 25, 0];
const XT = ["0.0", "0.2", "0.4", "0.6", "0.8", "1.0"];

function Plot() {
  return (
    <div className="flex h-[601px] w-[2842px] bg-white pt-[26px] font-['DejaVu_Sans',sans-serif] text-[26.5px] text-[#1a1a1a]">
      <div className="flex w-[124px] shrink-0 justify-end pt-[108px]">
        <div className="flex h-[310px] w-[34px] rotate-180 items-center justify-center leading-[34px] tracking-[0.9px] whitespace-nowrap [writing-mode:vertical-rl]">
          Frequency (kHz)
        </div>
      </div>
      <div className="flex w-[83px] shrink-0 flex-col pt-[12px]">
        {YT.map((f) => (
          <div key={f} className="flex h-[68.57px] shrink-0 items-center justify-end">
            <span className="pt-[2px] leading-[30px] tracking-[-0.4px]">{f}</span>
            <span className="ml-[13px] h-[2px] w-[10px] bg-[#111]" />
          </div>
        ))}
      </div>
      <div className="flex shrink-0 flex-col">
        <SpectrogramImage />
        <div className="-ml-[243px] flex">
          {XT.map((t) => (
            <div key={t} className="flex w-[486.3px] shrink-0 flex-col items-center">
              <span className="h-[9px] w-[2px] bg-[#111]" />
              <span className="mt-[8px] leading-[30px] tracking-[-0.3px]">{t}</span>
            </div>
          ))}
        </div>
      </div>
    </div>
  );
}

const INFO: [string, number, string, number, string, number, string, number][] = [
  ["Survey:", 98, "s1.h5", 75, "FFT window size:", 227, "1024", 66],
  ["Item id:", 101, "e1.d1.wave_20180908t212225", 416, "Time resolution:", 219, "1/4 ms", 90],
  ["Title:", 68, "WURB2_20180908T212225+0200_N57.6627E12.6393_TE384_Myotis.wav", 1017, "View part:", 137, "All", 35],
];

function SpectrogramDock() {
  return (
    <div className="flex w-[2948px] shrink-0 flex-col">
      <div className="flex h-[39px] items-center pl-[9px]">
        <T w={175}>Spectrogram</T>
        <DockButtons className="ml-[2710px] gap-[6px]" />
      </div>
      <div className="flex h-[938px] w-[2948px] flex-col border-2 border-[#bababa] pt-[18px] pl-[18px]">
        <Tabs first="Spectrogram" firstW={174} firstCls="w-[225px]" />
        <div className="flex h-[842px] w-[2909px] flex-col border-2 border-[#b4b4b4] bg-[#fcfcfc] pt-[30px] pl-[30px]">
          {INFO.map(([a, aw, b, bw, c, cw, d, dw]) => (
            <div key={a} className="mb-[10px] flex h-[50px] items-center">
              <div className="w-[120px]">
                <T w={aw}>{a}</T>
              </div>
              <div className="-mt-[4px] flex h-[41px] w-[2000px] items-center bg-white pl-[5px]">
                <T w={bw} font="value">
                  {b}
                </T>
              </div>
              <div className="flex w-[552px] justify-end">
                <T w={cw}>{c}</T>
              </div>
              <div className="w-[11px]" />
              <Combo className="w-[160px]" text={d} w={dw} />
            </div>
          ))}
          <Plot />
        </div>
      </div>
    </div>
  );
}

function BottomBar() {
  return (
    <div className="flex h-[104px] shrink-0 flex-col">
      <div className="h-[2px] bg-[#dedede]" />
      <div className="flex h-[101px] items-start border-b-2 border-[#a8a8a8]">
        <div className="flex h-[49px] w-[255px] items-center justify-center rounded-b-[6px] border-2 border-[#b9b9b9] bg-[#dcdcdc]">
          <T w={204}>Application log</T>
        </div>
        <div className="flex h-[54px] w-[223px] items-center justify-center rounded-b-[6px] border-2 border-t-0 border-[#b9b9b9] bg-linear-to-b from-[#f0f0f0] to-[#fafafa]">
          <T w={174}>Spectrogram</T>
        </div>
        <div className="flex h-full flex-1 items-end justify-end border-t-2 border-[#c0c0c0] pb-[2px]">
          <svg viewBox="0 0 24 28" className="h-[28px] w-[24px]" fill="#b0b0b0">
            {[
              [18, 2],
              [12, 8],
              [18, 8],
              [6, 14],
              [12, 14],
              [18, 14],
              [0, 20],
              [6, 20],
              [12, 20],
              [18, 20],
            ].map(([x, y]) => (
              <rect key={`${x}-${y}`} x={x} y={y} width="2" height="2" />
            ))}
          </svg>
        </div>
      </div>
    </div>
  );
}

export default function App() {
  return (
    <div className="flex h-[2194px] w-[2950px] flex-col overflow-hidden bg-[#efefef] text-[#111]">
      <TitleBar />
      <div className="flex flex-1 flex-col border-l-2 border-[#b3b3b6]">
        <MenuBar />
        <div className="flex h-[997px] shrink-0">
          <Activities />
          <div className="flex w-[30px] shrink-0 justify-center pt-[484px] pr-[18px]">
            <Grip />
          </div>
          <WaveFiles />
          <div className="flex w-[30px] shrink-0 justify-end pt-[484px] pr-[4px]">
            <Grip />
          </div>
          <MapDock />
          <SideTabs />
        </div>
        <div className="flex h-[10px] shrink-0 items-center justify-center">
          <Grip horizontal />
        </div>
        <SpectrogramDock />
        <BottomBar />
      </div>
    </div>
  );
}
